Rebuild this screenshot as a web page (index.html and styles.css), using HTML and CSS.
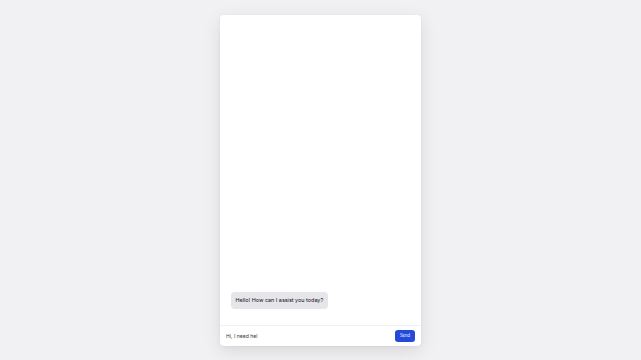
FILE: index.html
```html
<!DOCTYPE html>
<html>
<head>
<meta charset="utf-8">
<link rel="stylesheet" href="styles.css">
</head>
<body>
<div class="chat">
  <div class="messages">
    <div class="bubble">Hello! How can I assist you today?</div>
  </div>
  <div class="composer">
    <div class="input">Hi, I need hel</div>
    <button class="send">Send</button>
  </div>
</div>
</body>
</html>
```
FILE: styles.css
```css
html, body {
  margin: 0;
  height: 100%;
}
body {
  background: #f1f1f4;
  display: flex;
  align-items: center;
  justify-content: center;
  font-family: Inter, "Noto Sans", sans-serif;
}
.chat {
  width: 201px;
  height: 331px;
  background: #ffffff;
  border-radius: 4px;
  box-shadow: 0 5px 18px rgba(0, 0, 0, 0.10), 0 1px 3px rgba(0, 0, 0, 0.05);
  display: flex;
  flex-direction: column;
  overflow: hidden;
}
.messages {
  flex: 1;
  display: flex;
  flex-direction: column;
  justify-content: flex-end;
  align-items: flex-start;
  padding: 10px 10px 16px 11px;
}
.bubble {
  background: #e5e5ea;
  color: #111;
  font-size: 5.45px;
  line-height: 9px;
  padding: 4px 4.5px;
  border-radius: 4px;
}
.composer {
  height: 21px;
  border-top: 1px solid #f2f2f4;
  display: flex;
  align-items: center;
  justify-content: space-between;
  padding: 0 6px;
  box-sizing: border-box;
}
.input {
  font-size: 5.1px;
  color: #333;
}
.send {
  width: 20px;
  height: 12px;
  border: none;
  border-radius: 3px;
  background: #2549d8;
  color: #fff;
  font-family: inherit;
  font-size: 4.2px;
  padding: 0;
}
```
